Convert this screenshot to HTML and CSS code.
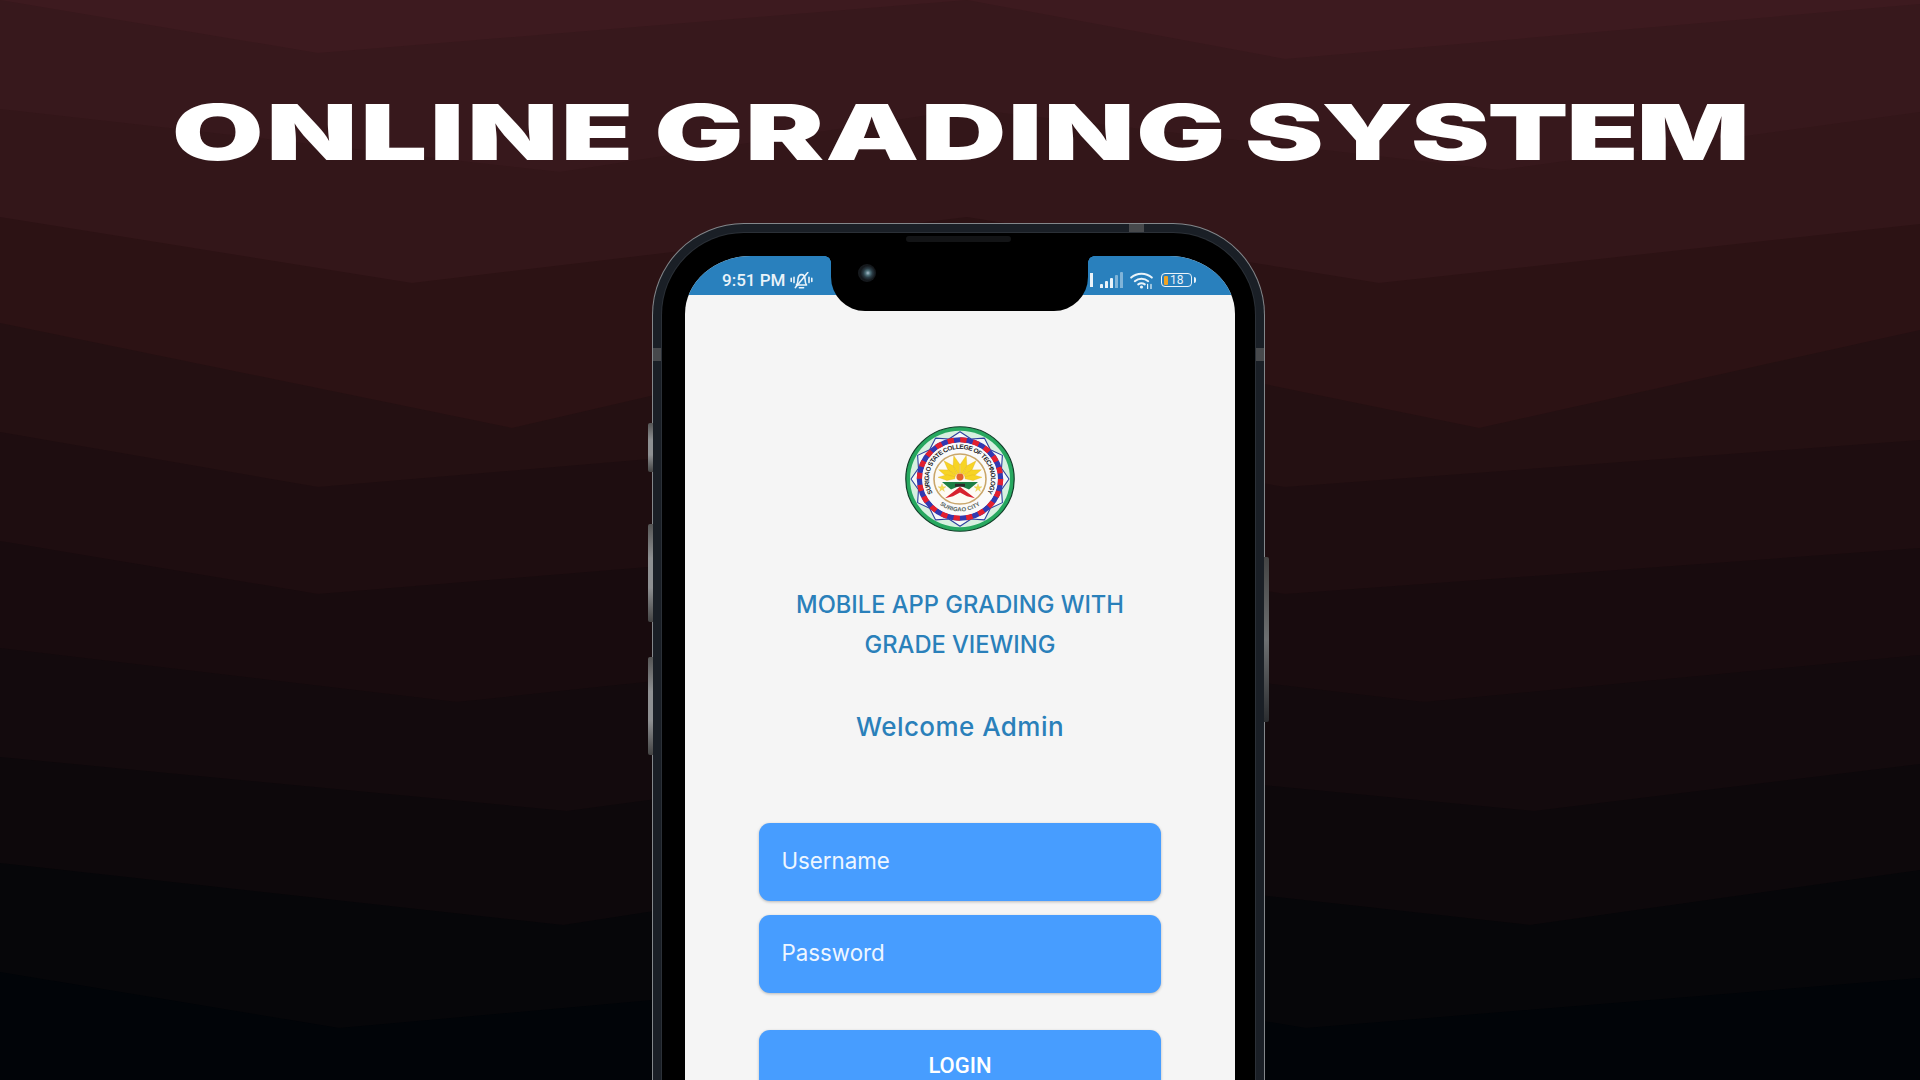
FILE: index.html
```html
<!DOCTYPE html>
<html lang="en">
<head>
<meta charset="utf-8">
<title>Online Grading System</title>
<link rel="stylesheet" href="styles.css">
</head>
<body>
<main class="stage">
  <svg class="backdrop" viewBox="0 0 1920 1080" aria-hidden="true">
    <rect class="b0" width="1920" height="1080"/>
    <polygon class="b1" points="0,0 318,53 967,0 1285,59 1920,4 1920,1080 0,1080"/>
    <polygon class="b2" points="0,109 560,172 967,109 1500,170 1920,112 1920,1080 0,1080"/>
    <polygon class="b3" points="0,217 412,283 967,217 1379,283 1920,224 1920,1080 0,1080"/>
    <polygon class="b4" points="0,323 512,428 967,323 1479,428 1920,330 1920,1080 0,1080"/>
    <polygon class="b5" points="0,432 318,487 967,432 1285,487 1920,440 1920,1080 0,1080"/>
    <polygon class="b6" points="0,541 318,594 967,541 1285,594 1920,548 1920,1080 0,1080"/>
    <polygon class="b7" points="0,648 457,702 967,648 1424,702 1920,655 1920,1080 0,1080"/>
    <polygon class="b8" points="0,757 567,811 967,757 1534,811 1920,764 1920,1080 0,1080"/>
    <polygon class="b9" points="0,863 563,925 967,863 1530,925 1920,870 1920,1080 0,1080"/>
    <polygon class="b10" points="0,972 339,1028 967,972 1306,1028 1920,978 1920,1080 0,1080"/>
  </svg>

  <h1 class="headline"><span class="word-a">ONLINE</span> <span class="word-b">GRADING</span> <span class="word-c">SYSTEM</span></h1>

  <div class="phone">
    <span class="key key-l1"></span>
    <span class="key key-l2"></span>
    <span class="key key-l3"></span>
    <span class="key key-r1"></span>
    <span class="antenna antenna-top"></span>
    <span class="antenna antenna-left"></span>
    <span class="antenna antenna-right"></span>

    <div class="bezel">
      <div class="notch">
        <span class="speaker"></span>
        <span class="camera"></span>
      </div>

      <div class="screen">
        <div class="statusbar">
          <div class="status-group">
            <span class="clock">9:51 PM</span>
            <svg class="bell" viewBox="0 0 23 17" aria-hidden="true">
              <path d="M6.4 13c1.5-1.4 1.4-3.4 1.5-5.4C8.1 4.6 9.6 2.6 11.5 2.6s3.4 2 3.6 5c.1 2 0 4 1.5 5.4z"/>
              <path d="M9.4 15.8h4.2"/>
              <path d="M5.4 15.6 17.8.6"/>
              <path d="M4 5.2v5.4M1.2 6.4v3M19 5.2v5.4M21.8 6.4v3"/>
            </svg>
          </div>
          <div class="status-group status-right">
            <span class="tick"></span>
            <span class="signal">
              <i class="bar bar-1"></i><i class="bar bar-2"></i><i class="bar bar-3"></i><i class="bar bar-4 dim"></i><i class="bar bar-5 dim"></i>
            </span>
            <svg class="wifi" viewBox="0 0 23 17" aria-hidden="true">
              <path d="M1.2 5.6C7 .4 16 .4 21.8 5.6"/>
              <path d="M4.8 9.2c3.8-3.2 9.6-3.2 13.4 0"/>
              <path d="M8.2 12.4c2-1.5 4.6-1.5 6.6 0"/>
              <circle class="wifi-dot" cx="11.5" cy="15" r="1.6"/>
              <path class="wifi-arrow" d="M17.6 12.4v4.4M21 12.4v4.4"/>
            </svg>
            <span class="battery"><i class="battery-fill"></i><b class="battery-num">18</b></span>
          </div>
        </div>

        <div class="login">
          <svg class="seal" viewBox="-55 -55 110 110" preserveAspectRatio="none" role="img" aria-label="Surigao State College of Technology seal">
            <defs>
              <path id="arc-top" d="M-27 15A31 31 0 1 1 27 15"/>
              <path id="arc-bottom" d="M-20 27A33.6 33.6 0 0 0 20 27"/>
            </defs>
            <circle class="seal-rim" r="54.2"/>
            <circle class="seal-mint" r="50"/>
            <polygon class="seal-zig" points="49,0 41.5,11.1 42.4,24.5 30.4,30.4 24.5,42.4 11.1,41.5 0,49 -11.1,41.5 -24.5,42.4 -30.4,30.4 -42.4,24.5 -41.5,11.1 -49,0 -41.5,-11.1 -42.4,-24.5 -30.4,-30.4 -24.5,-42.4 -11.1,-41.5 0,-49 11.1,-41.5 24.5,-42.4 30.4,-30.4 42.4,-24.5 41.5,-11.1"/>
            <circle class="seal-blue" r="40.5"/>
            <circle class="seal-red" r="40.5"/>
            <circle class="seal-white" r="37.8"/>
            <text class="seal-text"><textPath href="#arc-top" startOffset="50%" text-anchor="middle" textLength="128">SURIGAO STATE COLLEGE OF TECHNOLOGY</textPath></text>
            <text class="seal-text seal-text-low"><textPath href="#arc-bottom" startOffset="50%" text-anchor="middle">SURIGAO CITY</textPath></text>
            <circle class="seal-tan" r="26"/>
            <g class="seal-rays" transform="translate(0 -1)">
              <polygon points="-1,-5 -3.4,-14 0,-24 3.4,-14 1,-5" transform="rotate(-15)"/>
              <polygon points="-1,-5 -3.4,-14 0,-24 3.4,-14 1,-5" transform="rotate(15)"/>
              <polygon points="-1,-5 -3.4,-14 0,-24 3.4,-14 1,-5" transform="rotate(-42)"/>
              <polygon points="-1,-5 -3.4,-14 0,-24 3.4,-14 1,-5" transform="rotate(42)"/>
              <polygon points="-1,-5 -3.4,-14 0,-23 3.4,-14 1,-5" transform="rotate(-68)"/>
              <polygon points="-1,-5 -3.4,-14 0,-23 3.4,-14 1,-5" transform="rotate(68)"/>
              <polygon points="-1,-5 -3,-13 0,-22 3,-13 1,-5" transform="rotate(-88)"/>
              <polygon points="-1,-5 -3,-13 0,-22 3,-13 1,-5" transform="rotate(88)"/>
            </g>
            <circle class="seal-flame" cy="-2" r="3.6"/>
            <polygon class="seal-green" points="-18,3 18,3 9,11 0,7 -9,11"/>
            <polygon class="seal-crimson" points="-15,20 0,8 15,20 7,18 0,14 -7,18"/>
            <rect class="seal-bar" x="-5" y="5" width="10" height="3"/>
            <polygon class="seal-star" points="-18,5 -17,8 -14,8 -16.5,10 -15.5,13 -18,11 -20.5,13 -19.5,10 -22,8 -19,8"/>
            <polygon class="seal-star" points="18,5 19,8 22,8 19.5,10 20.5,13 18,11 15.5,13 16.5,10 14,8 17,8"/>
          </svg>

          <h2 class="app-name">MOBILE APP GRADING WITH<br>GRADE VIEWING</h2>
          <p class="welcome">Welcome Admin</p>

          <div class="form">
            <div class="field">Username</div>
            <div class="field">Password</div>
            <button class="submit" type="button">LOGIN</button>
          </div>
        </div>
      </div>
    </div>
  </div>
</main>
</body>
</html>
```

FILE: styles.css
```css
* { box-sizing: border-box; }
html, body { margin: 0; height: 100%; }
body { background: #010408; overflow: hidden; }

.stage {
  position: relative;
  height: 1080px;
  overflow: hidden;
  display: flex;
  flex-direction: column;
  align-items: center;
}

.backdrop { position: absolute; inset: 0; width: 1920px; height: 1080px; }
.b0 { fill: #3d1a1f; }
.b1 { fill: #37181c; }
.b2 { fill: #331619; }
.b3 { fill: #2c1214; }
.b4 { fill: #241012; }
.b5 { fill: #1e0d10; }
.b6 { fill: #180b0e; }
.b7 { fill: #130a0d; }
.b8 { fill: #0d080b; }
.b9 { fill: #060609; }
.b10 { fill: #010408; }

.headline {
  position: relative;
  margin: 93px 0 0;
  font: 900 77px/78px "Inter", "Liberation Sans", sans-serif;
  color: #fff;
  white-space: nowrap;
  word-spacing: -3.6px;
  transform: scaleX(1.54);
}
.word-a { letter-spacing: 1.7px; }
.word-b { letter-spacing: .8px; }
.word-c { letter-spacing: -1.6px; }

.phone {
  position: relative;
  flex: none;
  width: 613px;
  height: 1100px;
  margin: 52px 3px 0 0;
  padding: 9px;
  border: 1px solid #83878b;
  border-bottom: 0;
  border-radius: 92px 92px 0 0;
  background: #1a1f26;
}

.key {
  position: absolute;
  width: 5px;
  background: linear-gradient(180deg, #555 0%, #8e9092 35%, #8e9092 65%, #444 100%);
}
.key-l1, .key-l2, .key-l3 { left: -5px; border-radius: 2px 0 0 2px; }
.key-l1 { top: 199px; height: 49px; }
.key-l2 { top: 300px; height: 98px; }
.key-l3 { top: 433px; height: 98px; }
.key-r1 { right: -5px; top: 333px; height: 165px; border-radius: 0 2px 2px 0; background: linear-gradient(180deg, #444 0%, #6d6f71 50%, #2b2d30 100%); }

.antenna { position: absolute; background: #47494c; }
.antenna-top { top: 0; left: 476px; width: 15px; height: 9px; }
.antenna-left { top: 124px; left: 0; width: 9px; height: 13px; }
.antenna-right { top: 124px; right: 0; width: 9px; height: 13px; }

.bezel {
  position: relative;
  height: 100%;
  padding: 23px 19px 0 23px;
  border-radius: 82px 82px 0 0;
  background: #000;
  box-shadow: 0 0 0 1px #2b3037;
}

.notch {
  position: absolute;
  z-index: 2;
  top: 0;
  left: 169px;
  width: 257px;
  height: 78px;
  border-radius: 0 0 34px 34px;
  background: #000;
}
.notch::before, .notch::after {
  content: "";
  position: absolute;
  top: 23px;
  width: 6px;
  height: 6px;
}
.notch::before { left: -6px; background: radial-gradient(circle at 0 100%, transparent 5.5px, #000 6px); }
.notch::after { right: -6px; background: radial-gradient(circle at 100% 100%, transparent 5.5px, #000 6px); }

.speaker {
  position: absolute;
  top: 3px;
  left: 75px;
  width: 105px;
  height: 6px;
  border-radius: 3px;
  background: #131416;
}
.camera {
  position: absolute;
  top: 31px;
  left: 27px;
  width: 18px;
  height: 18px;
  border-radius: 50%;
  background: radial-gradient(circle at 55% 50%, #a8bccb 0, #4d6f78 18%, #2a3b44 34%, #14181c 55%, #1b1e22 100%);
}

.screen {
  position: relative;
  width: 550px;
  height: 1050px;
  overflow: hidden;
  border-radius: 66px 66px 0 0 / 58px 58px 0 0;
  background: #f5f5f5;
}

.statusbar {
  height: 39px;
  padding: 9px 39px 0 37px;
  display: flex;
  justify-content: space-between;
  align-items: center;
  background: #2980bd;
  color: #eaf3f9;
}
.status-group { display: flex; align-items: center; }
.clock { font: 500 17px/1 "Roboto", sans-serif; }

.bell { width: 23px; height: 17px; margin-left: 5px; fill: none; stroke: #eaf3f9; stroke-width: 1.6; stroke-linecap: round; stroke-linejoin: round; }

.tick { width: 3px; height: 14px; margin-right: 7px; background: #eaf3f9; }
.signal { display: flex; align-items: flex-end; gap: 2px; height: 16px; margin-right: 7px; }
.bar { width: 3px; background: #eaf3f9; border-radius: 1px 1px 0 0; }
.bar-1 { height: 4px; }
.bar-2 { height: 7px; }
.bar-3 { height: 10px; }
.bar-4 { height: 13px; }
.bar-5 { height: 16px; }
.dim { opacity: .45; }

.wifi { width: 23px; height: 17px; margin-right: 8px; fill: none; stroke: #eaf3f9; stroke-width: 2; stroke-linecap: round; }
.wifi-dot { fill: #eaf3f9; stroke: none; }
.wifi-arrow { stroke-width: 1.2; }

.battery {
  position: relative;
  width: 31px;
  height: 14px;
  margin-right: 4px;
  display: flex;
  align-items: center;
  border: 1.5px solid #eaf3f9;
  border-radius: 4px;
}
.battery::after {
  content: "";
  position: absolute;
  right: -5px;
  top: 2.5px;
  width: 2.5px;
  height: 6px;
  border-radius: 0 2px 2px 0;
  background: #eaf3f9;
}
.battery-fill { width: 4px; height: 9px; margin-left: 2px; border-radius: 1px; background: #f0a324; }
.battery-num { margin-left: 2px; font: 400 12px/1 "Roboto", sans-serif; color: #eaf3f9; }

.login { display: flex; flex-direction: column; align-items: center; }

.seal { width: 110px; height: 106px; margin-top: 131px; }
.seal-rim { fill: #27a85f; stroke: #123f2a; stroke-width: 1.2; }
.seal-mint { fill: #d7f0e0; }
.seal-zig { fill: #f6f8f8; stroke: #2c3f9e; stroke-width: 1.1; stroke-linejoin: round; }
.seal-blue { fill: none; stroke: #3239b0; stroke-width: 5.4; }
.seal-red { fill: none; stroke: #e3202f; stroke-width: 5.4; stroke-dasharray: 6.4 6.32; }
.seal-white { fill: #fafafa; }
.seal-text { font: 700 6.6px "Liberation Sans", sans-serif; fill: #1d2328; }
.seal-text-low { font-size: 6px; fill: #55625a; }
.seal-tan { fill: #fdfbf4; stroke: #c9a66b; stroke-width: 1.6; }
.seal-rays { fill: #f7d423; stroke: #d9a520; stroke-width: .3; }
.seal-flame { fill: #e4632a; }
.seal-green { fill: #1d7f45; }
.seal-crimson { fill: #d7232f; }
.seal-bar { fill: #2c2a28; }
.seal-star { fill: #f5dc4b; stroke: #caa72a; stroke-width: .2; }

.app-name {
  margin: 53px 0 0;
  font: 500 23.7px/40px "Inter", "Liberation Sans", sans-serif;
  color: #2a80ba;
  text-align: center;
}
.welcome {
  margin: 42px 0 0;
  font: 500 26px/40px "Inter", "Liberation Sans", sans-serif;
  letter-spacing: .45px;
  color: #2a80ba;
}

.form { width: 402px; margin-top: 76px; display: flex; flex-direction: column; gap: 14px; }
.field, .submit {
  height: 78px;
  border: 0;
  border-radius: 11px;
  background: #479dff;
  color: #fff;
  box-shadow: 0 1px 3px rgba(0, 0, 0, .25);
}
.field {
  display: flex;
  align-items: center;
  padding: 0 0 2px 22.5px;
  font: 400 22.3px/1 "Inter", "Liberation Sans", sans-serif;
  color: #eef6ff;
}
.submit {
  margin-top: 23px;
  padding-bottom: 8px;
  font: 500 22px/1 "Roboto", sans-serif;
}
```
